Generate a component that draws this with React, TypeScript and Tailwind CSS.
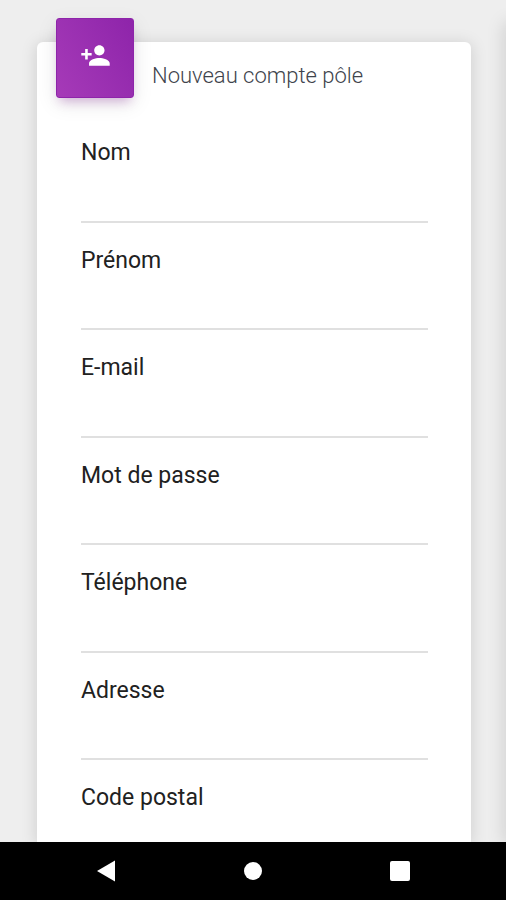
import React from "react";

type Field = { id: string; label: string; type: string };

const fields: Field[] = [
  { id: "nom", label: "Nom", type: "text" },
  { id: "prenom", label: "Prénom", type: "text" },
  { id: "email", label: "E-mail", type: "email" },
  { id: "password", label: "Mot de passe", type: "password" },
  { id: "telephone", label: "Téléphone", type: "tel" },
  { id: "adresse", label: "Adresse", type: "text" },
];

const labelClass = "block text-[23px] leading-7 text-[#212121]";

function FormField({ id, label, type }: Field) {
  return (
    <div className="flex min-h-24 flex-1 flex-col border-b-2 border-[#e0e0e0] pt-6">
      <label htmlFor={id} className={labelClass}>
        {label}
      </label>
      <input id={id} type={type} className="w-full min-w-0 flex-1 bg-transparent text-[23px] outline-none" />
    </div>
  );
}

function NavBar() {
  return (
    <nav className="z-10 flex h-[58px] shrink-0 items-center justify-around bg-black px-[33px]">
      <button type="button" aria-label="Retour" className="flex size-6 items-center justify-center">
        <svg viewBox="0 0 24 24" className="size-6" fill="#fff">
          <path d="M3 12 21 1.500V22.500Z" />
        </svg>
      </button>
      <button type="button" aria-label="Accueil" className="flex size-6 items-center justify-center">
        <span className="size-[18px] rounded-full bg-white" />
      </button>
      <button type="button" aria-label="Applications" className="flex size-6 items-center justify-center">
        <span className="size-5 rounded-[2px] bg-white" />
      </button>
    </nav>
  );
}

export default function App() {
  return (
    <div className="flex h-screen flex-col overflow-hidden bg-[#eeeeee] font-[Roboto,sans-serif]">
      <main className="relative flex min-h-0 flex-1 flex-col overflow-hidden pt-[42px] pr-[35px] pl-[37px]">
        <div className="absolute top-6 bottom-0 left-full w-10 shadow-[0_0_18px_2px_rgba(0,0,0,0.13)]" />
        <section className="flex flex-1 flex-col rounded-t-md bg-white shadow-[0_2px_16px_1px_rgba(0,0,0,0.13)]">
          <header className="flex h-[73px] shrink-0 gap-[18px] pl-[19px]">
            <div className="-mt-6 flex h-20 w-[78px] justify-center rounded-[3px] border border-[#8e24aa] bg-linear-60 from-[#a63ab8] to-[#8e24aa] pt-[21px] shadow-[0_6px_20px_0_rgba(0,0,0,0.1),0_7px_10px_-4px_rgba(156,39,176,0.3)]">
              <svg viewBox="0 0 24 24" className="size-[31px]" fill="#fff">
                <path d="M15 12c2.210 0 4-1.790 4-4s-1.790-4-4-4-4 1.790-4 4 1.790 4 4 4zm-9-2V7H4v3H1v2h3v3h2v-3h3v-2H6zm9 4c-2.670 0-8 1.340-8 4v2h16v-2c0-2.660-5.330-4-8-4z" />
              </svg>
            </div>
            <h1 className="pt-5 text-[22px] leading-7 font-light text-[#3e444c]">Nouveau compte pôle</h1>
          </header>
          <form className="flex flex-1 flex-col pr-[43px] pl-11">
            {fields.map((field) => (
              <FormField key={field.id} {...field} />
            ))}
            <div className="h-[82px] shrink-0 pt-6">
              <label htmlFor="code-postal" className={labelClass}>
                Code postal
              </label>
              <input id="code-postal" type="text" className="h-7 w-full bg-transparent text-[23px] outline-none" />
            </div>
          </form>
        </section>
      </main>
      <NavBar />
    </div>
  );
}
